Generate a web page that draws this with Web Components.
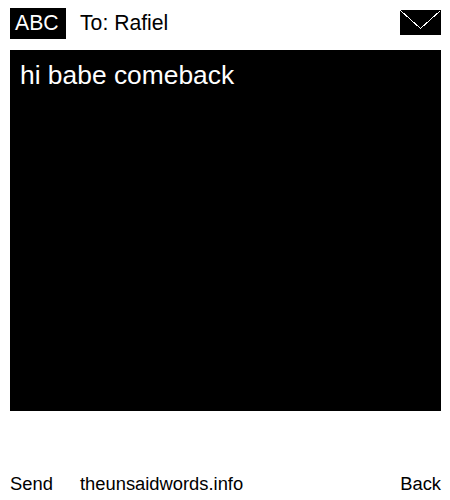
<!DOCTYPE html>
<html>
<head>
<meta charset="utf-8">
<title>Message</title>
<style>
  html, body { margin: 0; padding: 0; background: #fff; }
  body { font-family: "Liberation Sans", Arial, sans-serif; color: #000; }
</style>
</head>
<body>
<message-screen>
  <message-header slot="header" to="Rafiel" mode="ABC"></message-header>
  <message-body slot="body">hi babe comeback</message-body>
  <message-footer slot="footer" left="Send" middle="theunsaidwords.info" right="Back"></message-footer>
</message-screen>

<script>
  (function () {
    customElements.define(
      "message-screen",
      class extends HTMLElement {
        constructor() {
          super();
          this.attachShadow({ mode: "open" });
          this.shadowRoot.innerHTML = `
            <style>
              :host {
                display: flex;
                flex-direction: column;
                width: 450px;
                height: 500px;
                box-sizing: border-box;
                padding: 8px 9px 0 10px;
              }
            </style>
            <slot name="header"></slot>
            <slot name="body"></slot>
            <slot name="footer"></slot>`;
        }
      }
    );

    customElements.define(
      "message-header",
      class extends HTMLElement {
        connectedCallback() {
          this.attachShadow({ mode: "open" });
          this.shadowRoot.innerHTML = `
            <style>
              :host {
                display: flex;
                align-items: flex-start;
                height: 42px;
                font-size: 21.2px;
                line-height: 29px;
              }
              .mode {
                width: 56px;
                height: 31px;
                background: #000;
                color: #fff;
                padding-left: 5px;
                box-sizing: border-box;
              }
              .to {
                margin-left: 14px;
                flex: 1;
              }
              svg { display: block; margin-top: 2px; }
            </style>
            <div class="mode">${this.getAttribute("mode")}</div>
            <div class="to">To: ${this.getAttribute("to")}</div>
            <svg width="41" height="25" viewBox="0 0 41 25" shape-rendering="crispEdges">
              <rect width="41" height="25" fill="#000"/>
              <path d="M0.5 0.5 L20.5 18.5 L40.5 0.5" fill="none" stroke="#fff" stroke-width="1"/>
            </svg>`;
        }
      }
    );

    customElements.define(
      "message-body",
      class extends HTMLElement {
        constructor() {
          super();
          this.attachShadow({ mode: "open" });
          this.shadowRoot.innerHTML = `
            <style>
              :host {
                display: block;
                height: 361px;
                box-sizing: border-box;
                padding: 10px;
                background: #000;
                color: #fff;
                font-size: 26.4px;
                line-height: 31px;
              }
            </style>
            <slot></slot>`;
        }
      }
    );

    customElements.define(
      "message-footer",
      class extends HTMLElement {
        connectedCallback() {
          this.attachShadow({ mode: "open" });
          this.shadowRoot.innerHTML = `
            <style>
              :host {
                display: flex;
                margin-top: 62px;
                font-size: 18.35px;
                line-height: 22px;
              }
              .left { width: 70px; }
              .middle { flex: 1; }
            </style>
            <div class="left">${this.getAttribute("left")}</div>
            <div class="middle">${this.getAttribute("middle")}</div>
            <div class="right">${this.getAttribute("right")}</div>`;
        }
      }
    );
  })();
</script>
</body>
</html>
